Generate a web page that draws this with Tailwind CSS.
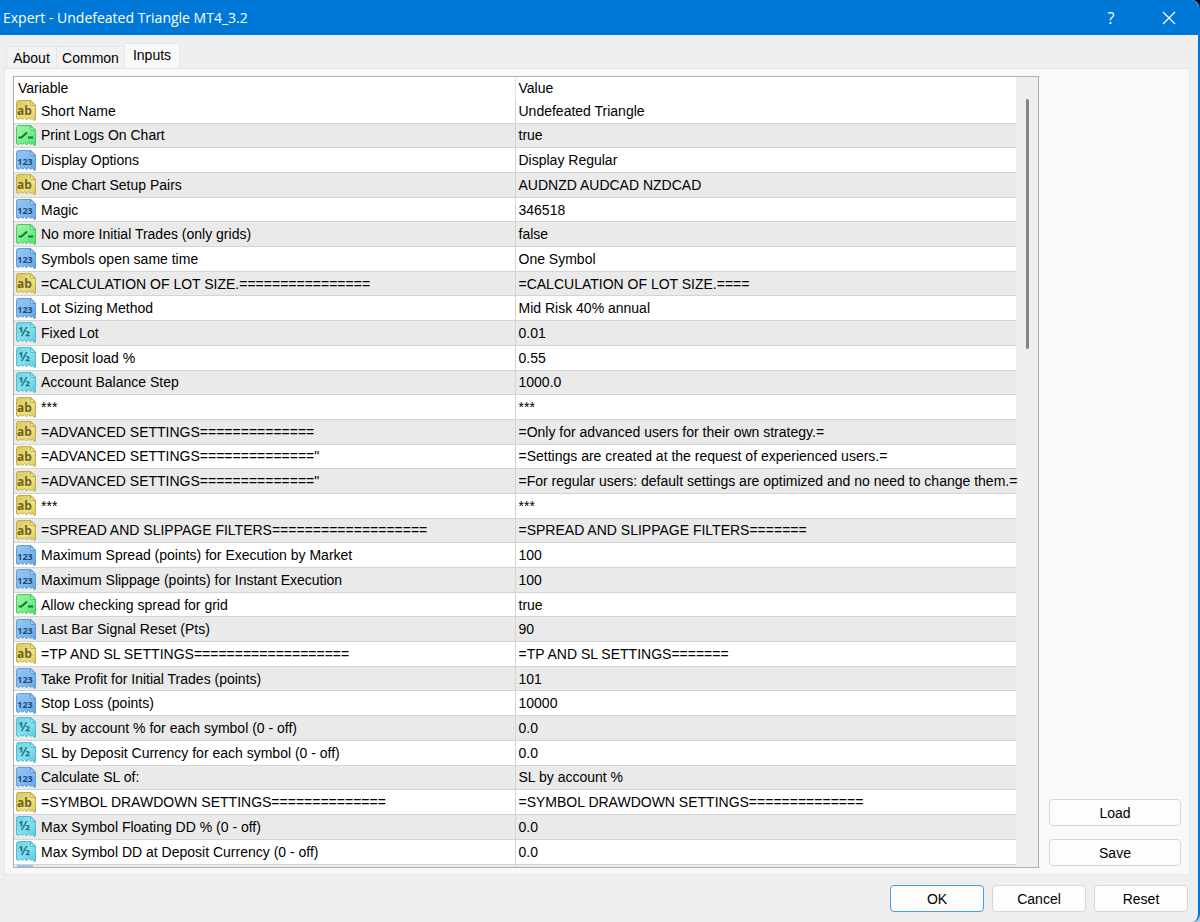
<!DOCTYPE html>
<html lang="en">
<head>
    <meta charset="UTF-8">
    <meta name="viewport" content="width=device-width, initial-scale=1.0">
    <title>Expert - Undefeated Triangle MT4_3.2</title>
    <script src="https://cdn.jsdelivr.net/npm/@tailwindcss/browser@4"></script>
</head>
<body class="bg-linear-to-b from-black to-[#c8c8c8]">
    <!-- Shared icon shapes -->
    <svg class="absolute size-0" aria-hidden="true">
        <defs>
            <linearGradient id="fillText" x1="0" y1="0" x2="1" y2="1"><stop offset="0" stop-color="#d6c55f"/><stop offset=".6" stop-color="#eee186"/><stop offset="1" stop-color="#dccb59"/></linearGradient>
            <linearGradient id="fillBool" x1="0" y1="0" x2="1" y2="1"><stop offset="0" stop-color="#a3efa9"/><stop offset=".5" stop-color="#7df190"/><stop offset="1" stop-color="#4fd970"/></linearGradient>
            <linearGradient id="fillInt" x1="0" y1="0" x2="1" y2="1"><stop offset="0" stop-color="#97c3ec"/><stop offset=".5" stop-color="#82bcf2"/><stop offset="1" stop-color="#66a3e0"/></linearGradient>
            <linearGradient id="fillReal" x1="0" y1="0" x2="1" y2="1"><stop offset="0" stop-color="#6fd3e0"/><stop offset=".5" stop-color="#8ae0ee"/><stop offset="1" stop-color="#5cc9de"/></linearGradient>
            <path id="paper" d="M2.500.5H15L19.500 5V20L18 20.500L16.500 18L14.500 19.500L12.500 17.500L10.500 20L8.500 17.500L6.500 19.500L5 17.500L3 19.500L.5 18.500V2.500Q.5.5 2.500.5Z"/>
            <path id="fold" d="M14.500 1V4.500Q14.500 5.500 15.500 5.500H19Z"/>
        </defs>
    </svg>

    <div class="flex h-screen flex-col overflow-hidden rounded-tr-lg rounded-br-lg border-r-2 border-[#0078d7] bg-[#efefef] font-['Liberation_Sans',Arial,sans-serif] text-[14px] leading-5 text-black">
        <header class="flex h-9 shrink-0 items-center border-b border-[#e4f1fb] bg-[#0078d7] pl-[3px] pr-[21px] text-white">
            <h1 class="flex-1 font-['Open_Sans',sans-serif] text-[14px]">Expert - Undefeated Triangle MT4_3.2</h1>
            <button type="button" aria-label="Help" class="mr-[42px] w-4 font-['Open_Sans',sans-serif] text-[16px]">?</button>
            <button type="button" aria-label="Close">
                <svg class="size-4" viewBox="0 0 16 16" fill="none" stroke="currentColor" stroke-width="1.200"><path d="M2 2L14 14M14 2L2 14"/></svg>
            </button>
        </header>

        <nav class="flex shrink-0 items-end pl-[6px] pt-[7px]">
            <button type="button" class="h-[22px] w-[51px] border border-b-0 border-[#e6e6e6] bg-[#f2f2f2]">About</button>
            <button type="button" class="h-[22px] w-[67px] border-t border-[#e6e6e6] bg-[#f2f2f2]">Common</button>
            <button type="button" class="-mb-px h-[26px] w-14 border border-b-0 border-[#e6e6e6] bg-[#f9f9f9] pb-1">Inputs</button>
        </nav>

        <main class="ml-1 mr-2 flex min-h-0 flex-1 gap-[10px] border border-[#e6e6e6] bg-[#f9f9f9] px-2 pb-[6px] pt-[7px]">
            <div class="flex min-w-0 flex-1 overflow-hidden border border-[#a9b0b8] bg-[#efefef]">
                <div class="min-w-0 flex-1">
                    <table class="h-full w-full table-fixed border-collapse bg-white text-left">
                        <thead>
                            <tr class="h-[22px]">
                                <th class="w-1/2 p-0 pl-1 font-normal">Variable</th>
                                <th class="w-1/2 border-l border-[#e6e6e6] p-0 pl-[3px] font-normal">Value</th>
                            </tr>
                        </thead>
                        <tbody id="inputs"></tbody>
                    </table>
                </div>
                <div class="flex w-[22px] shrink-0 justify-center pt-[22px]">
                    <div class="h-[250px] w-[3px] rounded-full bg-[#868686]"></div>
                </div>
            </div>
            <aside class="flex w-[132px] shrink-0 flex-col justify-end gap-[13px] pb-[2px]">
                <button type="button" class="h-[27px] rounded-sm border border-[#d6d6d6] bg-[#fdfdfd]">Load</button>
                <button type="button" class="h-[27px] rounded-sm border border-[#d6d6d6] bg-[#fdfdfd]">Save</button>
            </aside>
        </main>

        <footer class="flex shrink-0 justify-end gap-2 py-[10px] pr-[10px]">
            <button type="button" class="h-[27px] w-[94px] rounded-sm border border-[#4a9be0] bg-[#fdfdfd]">OK</button>
            <button type="button" class="h-[27px] w-[94px] rounded-sm border border-[#d6d6d6] bg-[#fdfdfd]">Cancel</button>
            <button type="button" class="h-[27px] w-[94px] rounded-sm border border-[#d6d6d6] bg-[#fdfdfd]">Reset</button>
        </footer>
    </div>

    <script>
        const icons = {
            text: `
                <use href="#paper" fill="url(#fillText)" stroke="#c2ae48"/>
                <use href="#fold" fill="#f3e99f" stroke="#b5a03c" stroke-width=".8"/>
                <text x="8.500" y="15" text-anchor="middle" font-family="Open Sans, sans-serif" font-weight="700" font-size="12" fill="#71621c">ab</text>`,
            bool: `
                <use href="#paper" fill="url(#fillBool)" stroke="#4cc663"/>
                <use href="#fold" fill="#a9f7b4" stroke="#43b85c" stroke-width=".8"/>
                <path d="M2.500 12.500H5.500L11 7.500M12 12.500H17" fill="none" stroke="#137a31" stroke-width="2"/>`,
            int: `
                <use href="#paper" fill="url(#fillInt)" stroke="#5f9dd8"/>
                <use href="#fold" fill="#a9d3f8" stroke="#4e8dca" stroke-width=".8"/>
                <text x="9" y="14.500" text-anchor="middle" font-family="Open Sans, sans-serif" font-weight="700" font-size="9" fill="#1d4a80">123</text>`,
            real: `
                <use href="#paper" fill="url(#fillReal)" stroke="#50bcd2"/>
                <use href="#fold" fill="#a5ebf5" stroke="#45aec4" stroke-width=".8"/>
                <text x="8.500" y="14" text-anchor="middle" font-family="Open Sans, sans-serif" font-weight="700" font-size="13" fill="#1b7484">½</text>`,
        };

        const inputs = [
            ['text', 'Short Name', 'Undefeated Triangle'],
            ['bool', 'Print Logs On Chart', 'true'],
            ['int', 'Display Options', 'Display Regular'],
            ['text', 'One Chart Setup Pairs', 'AUDNZD AUDCAD NZDCAD'],
            ['int', 'Magic', '346518'],
            ['bool', 'No more Initial Trades (only grids)', 'false'],
            ['int', 'Symbols open same time', 'One Symbol'],
            ['text', '=CALCULATION OF LOT SIZE.================', '=CALCULATION OF LOT SIZE.===='],
            ['int', 'Lot Sizing Method', 'Mid Risk 40% annual'],
            ['real', 'Fixed Lot', '0.01'],
            ['real', 'Deposit load %', '0.55'],
            ['real', 'Account Balance Step', '1000.0'],
            ['text', '***', '***'],
            ['text', '=ADVANCED SETTINGS==============', '=Only for advanced users for their own strategy.='],
            ['text', '=ADVANCED SETTINGS=============="', '=Settings are created at the request of experienced users.='],
            ['text', '=ADVANCED SETTINGS=============="', '=For regular users: default settings are optimized and no need to change them.='],
            ['text', '***', '***'],
            ['text', '=SPREAD AND SLIPPAGE FILTERS===================', '=SPREAD AND SLIPPAGE FILTERS======='],
            ['int', 'Maximum Spread (points) for Execution by Market', '100'],
            ['int', 'Maximum Slippage (points) for Instant Execution', '100'],
            ['bool', 'Allow checking spread for grid', 'true'],
            ['int', 'Last Bar Signal Reset (Pts)', '90'],
            ['text', '=TP AND SL SETTINGS===================', '=TP AND SL SETTINGS======='],
            ['int', 'Take Profit for Initial Trades (points)', '101'],
            ['int', 'Stop Loss (points)', '10000'],
            ['real', 'SL by account % for each symbol (0 - off)', '0.0'],
            ['real', 'SL by Deposit Currency for each symbol (0 - off)', '0.0'],
            ['int', 'Calculate SL of:', 'SL by account %'],
            ['text', '=SYMBOL DRAWDOWN SETTINGS==============', '=SYMBOL DRAWDOWN SETTINGS=============='],
            ['real', 'Max Symbol Floating DD % (0 - off)', '0.0'],
            ['real', 'Max Symbol DD at Deposit Currency (0 - off)', '0.0'],
        ];

        const rows = inputs.map(([type, name, value]) => `
            <tr class="border-b border-[#d4d4d4] even:bg-[#eaeaea]">
                <td class="p-0 pl-[2px]">
                    <div class="flex items-center gap-[5px] whitespace-nowrap">
                        <svg class="h-[21px] w-5 shrink-0" viewBox="0 0 20 21">${icons[type]}</svg>
                        <span>${name}</span>
                    </div>
                </td>
                <td class="whitespace-nowrap border-l border-[#d4d4d4] p-0 pl-[3px]">${value}</td>
            </tr>
        `).join('');

        // Top edge of the next row shows at the bottom of the list
        const nextRow = `
            <tr class="h-[3px] bg-[#eaeaea]">
                <td class="p-0 pl-[3px]"><div class="h-[2px] w-4 bg-[#97c3ec]"></div></td>
                <td class="border-l border-[#d4d4d4] p-0"></td>
            </tr>
        `;

        document.getElementById('inputs').innerHTML = rows + nextRow;
    </script>
</body>
</html>
